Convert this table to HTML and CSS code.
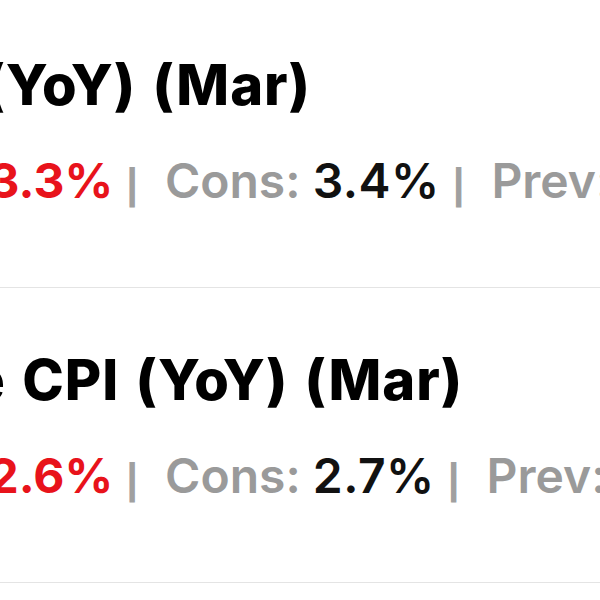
FILE: index.html
```html
<!DOCTYPE html>
<html lang="en">
<head>
<meta charset="utf-8">
<link rel="stylesheet" href="styles.css">
</head>
<body>
<div class="feed">
  <div class="item first">
    <div class="title">CPI (YoY) (Mar)</div>
    <div class="meta"><span class="label">Act:</span> <span class="act">3.3%</span><span class="sep">|</span><span class="label">Cons:</span> <span class="val">3.4%</span><span class="sep">|</span><span class="label">Prev:</span> <span class="val">3.2%</span></div>
  </div>
  <div class="item">
    <div class="title">Core CPI (YoY) (Mar)</div>
    <div class="meta"><span class="label">Act:</span> <span class="act">2.6%</span><span class="sep">|</span><span class="label">Cons:</span> <span class="val">2.7%</span><span class="sep">|</span><span class="label">Prev:</span> <span class="val">2.8%</span></div>
  </div>
  <div class="item"></div>
</div>
</body>
</html>
```

FILE: styles.css
```css
html, body {
  margin: 0;
  padding: 0;
  background: #fff;
  overflow: hidden;
}
body {
  width: 600px;
  height: 600px;
  font-family: Inter, "Liberation Sans", sans-serif;
}
.feed {
  margin-left: -118px;
  width: 900px;
}
.item {
  padding: 60px 0 78px 0;
  border-bottom: 1px solid #e4e4e4;
  white-space: nowrap;
}
.item.first {
  margin-top: -7px;
}
.title {
  margin-left: -12px;
  font-size: 56px;
  line-height: 64px;
  font-weight: 800;
  letter-spacing: 1px;
  word-spacing: 3px;
  color: #000;
}
.meta {
  margin-top: 36px;
  font-size: 48px;
  line-height: 56px;
  font-weight: 600;
  color: #9a9a9a;
}
.act {
  color: #e8131b;
  font-weight: 700;
}
.val {
  color: #111;
  letter-spacing: 0.5px;
}
.sep {
  font-family: "Liberation Sans", Arial, sans-serif;
  font-size: 42px;
  line-height: 1;
  font-weight: 700;
  color: #a0a0a0;
  margin: 0 27px 0 13px;
}
```
